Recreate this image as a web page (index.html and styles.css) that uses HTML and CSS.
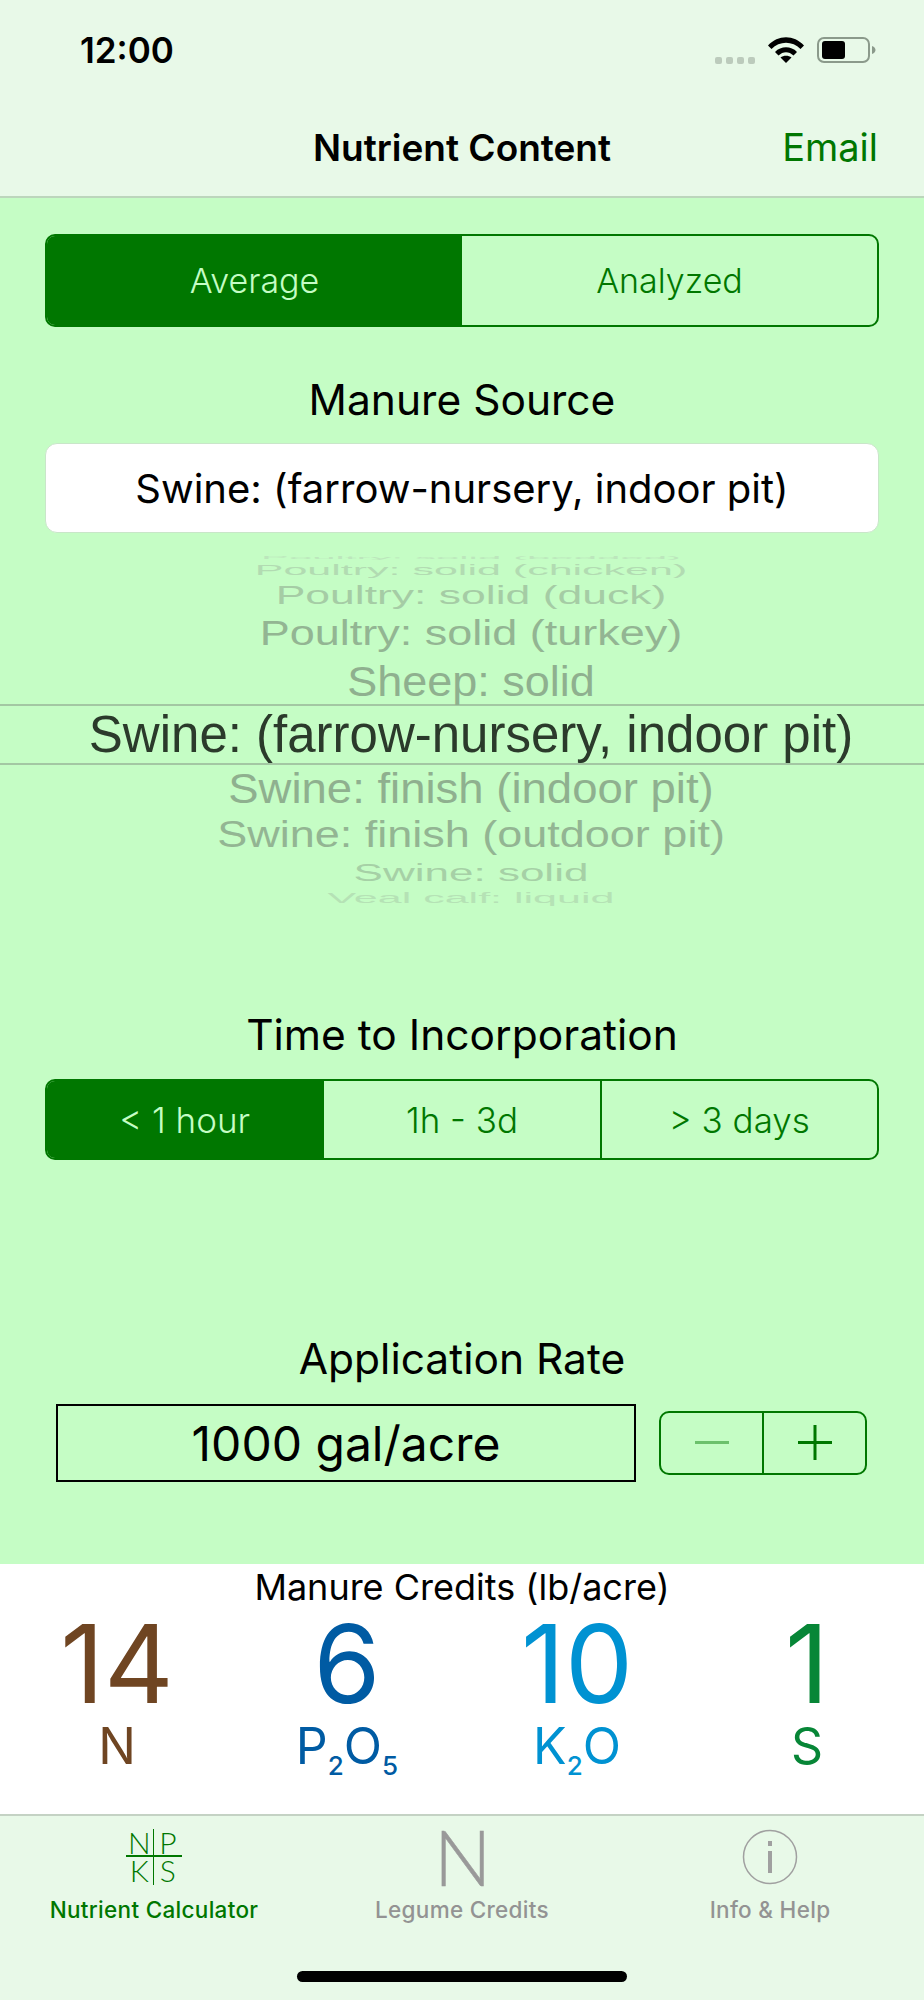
FILE: index.html
```html
<!DOCTYPE html>
<html lang="en">
<head>
  <meta charset="UTF-8">
  <meta name="viewport" content="width=device-width, initial-scale=1.0">
  <title>Nutrient Content</title>
  <link rel="stylesheet" href="styles.css">
</head>
<body>
  <div class="app">
    <!-- Status bar and navigation -->
    <header class="top-bar">
      <div class="status-bar">
        <span class="time">12:00</span>
        <div class="status-icons">
          <div class="signal"><i></i><i></i><i></i><i></i></div>
          <svg class="wifi" width="36" height="26" viewBox="0 0 36 26">
            <path d="M0 8.5C10 -2.5 26 -2.500 36 8.500L32.500 12C24.500 3.500 11.500 3.500 3.500 12Z"/>
            <path d="M7 15C13 8.800 23 8.800 29 15L25.500 18.500C21 14 15 14 10.500 18.500Z"/>
            <path d="M12.500 20.500C15.500 18 20.500 18 23.500 20.500L18 26Z"/>
          </svg>
          <svg class="battery" width="59" height="26" viewBox="0 0 59 26">
            <rect x="1" y="1" width="51" height="24" rx="6" fill="none" stroke="#8b9a8b" stroke-width="2"/>
            <rect x="5" y="4" width="23" height="18" rx="3"/>
            <path d="M55 9C57.500 10 58.500 11.500 58.500 13C58.500 14.500 57.500 16 55 17Z" fill="#8b9a8b"/>
          </svg>
        </div>
      </div>
      <nav class="nav-bar">
        <h1>Nutrient Content</h1>
        <a class="nav-action">Email</a>
      </nav>
    </header>

    <main class="content">
      <div class="segments source-type">
        <div class="segment active">Average</div>
        <div class="segment">Analyzed</div>
      </div>

      <h2 class="section-title manure-title">Manure Source</h2>
      <div class="source-input">Swine: (farrow-nursery, indoor pit)</div>

      <!-- Wheel picker, rows get squashed towards the edges -->
      <div class="picker">
        <div class="row row-ghost"><span>Poultry: solid (bedded)</span></div>
        <div class="row row-chicken"><span>Poultry: solid (chicken)</span></div>
        <div class="row row-duck"><span>Poultry: solid (duck)</span></div>
        <div class="row row-turkey"><span>Poultry: solid (turkey)</span></div>
        <div class="row row-sheep"><span>Sheep: solid</span></div>
        <div class="row row-selected"><span>Swine: (farrow-nursery, indoor pit)</span></div>
        <div class="row row-indoor"><span>Swine: finish (indoor pit)</span></div>
        <div class="row row-outdoor"><span>Swine: finish (outdoor pit)</span></div>
        <div class="row row-solid"><span>Swine: solid</span></div>
        <div class="row row-veal"><span>Veal calf: liquid</span></div>
      </div>

      <h2 class="section-title time-title">Time to Incorporation</h2>
      <div class="segments time-segments">
        <div class="segment active">&lt; 1 hour</div>
        <div class="segment">1h - 3d</div>
        <div class="segment">&gt; 3 days</div>
      </div>

      <h2 class="section-title rate-title">Application Rate</h2>
      <div class="rate-row">
        <div class="rate-input">1000 gal/acre</div>
        <div class="stepper">
          <div class="step-btn"><svg width="36" height="36" viewBox="0 0 36 36"><rect x="1" y="16" width="34" height="3" fill="#007700" opacity="0.45"/></svg></div>
          <div class="step-btn"><svg width="36" height="36" viewBox="0 0 36 36"><rect x="1" y="16" width="34" height="3" fill="#007700"/><rect x="16.500" y="0" width="3" height="35" fill="#007700"/></svg></div>
        </div>
      </div>
    </main>

    <section class="credits">
      <h3>Manure Credits (lb/acre)</h3>
      <div class="credit-grid">
        <div class="credit credit-n"><div class="amount">14</div><div class="nutrient">N</div></div>
        <div class="credit credit-p"><div class="amount">6</div><div class="nutrient">P<sub>2</sub>O<sub>5</sub></div></div>
        <div class="credit credit-k"><div class="amount">10</div><div class="nutrient">K<sub>2</sub>O</div></div>
        <div class="credit credit-s"><div class="amount">1</div><div class="nutrient">S</div></div>
      </div>
    </section>

    <footer class="tab-bar">
      <div class="tabs">
        <div class="tab tab-active">
          <div class="tab-icon npks">
            <b>N</b><b>P</b><b>K</b><b>S</b>
          </div>
          <span>Nutrient Calculator</span>
        </div>
        <div class="tab">
          <div class="tab-icon legume-n">N</div>
          <span>Legume Credits</span>
        </div>
        <div class="tab">
          <svg class="tab-icon" width="56" height="56" viewBox="0 0 56 56">
            <circle cx="28" cy="28" r="26.500" fill="none" stroke="#a0a0a0" stroke-width="1.500"/>
            <rect x="26" y="12" width="4" height="5" fill="#a0a0a0"/>
            <rect x="26" y="22" width="4" height="22" fill="#a0a0a0"/>
          </svg>
          <span>Info &amp; Help</span>
        </div>
      </div>
      <div class="home-indicator"></div>
    </footer>
  </div>
</body>
</html>
```
FILE: styles.css
```css
* {
  box-sizing: border-box;
}

body {
  margin: 0;
  padding: 0;
  font-family: 'Inter', 'Liberation Sans', sans-serif;
  background: #c5fdc5;
  color: #000;
}

.app {
  width: 924px;
  height: 2000px;
  display: flex;
  flex-direction: column;
  overflow: hidden;
}

/* Top bar */
.top-bar {
  height: 198px;
  background: #e8f9e8;
  border-bottom: 2px solid #bcd6bc;
}

.status-bar {
  height: 100px;
  padding: 0 48px 0 80px;
  display: flex;
  justify-content: space-between;
  align-items: center;
}

.time {
  font-size: 35px;
  font-weight: 600;
}

.status-icons {
  display: flex;
  align-items: center;
  gap: 13px;
}

.signal {
  display: flex;
  gap: 4px;
  margin-top: 20px;
}

.signal i {
  width: 7px;
  height: 7px;
  border-radius: 2px;
  background: #bccbbc;
}

.nav-bar {
  height: 94px;
  position: relative;
  display: flex;
  justify-content: center;
  align-items: center;
}

.nav-bar h1 {
  margin: 0;
  font-size: 37px;
  font-weight: 600;
}

.nav-action {
  position: absolute;
  right: 46px;
  top: 24px;
  font-size: 38px;
  color: #007700;
}

/* Main part */
.content {
  flex: 1;
  background: #c5fdc5;
}

.segments {
  display: flex;
  margin: 0 45px;
  border: 2px solid #007700;
  border-radius: 10px;
  overflow: hidden;
}

.segment {
  flex: 1;
  display: flex;
  justify-content: center;
  align-items: center;
  color: #007700;
  font-size: 34px;
  font-weight: 300;
}

.segment + .segment {
  border-left: 2px solid #007700;
}

.segment.active {
  background: #007700;
  color: #c5fdc5;
}

.source-type {
  height: 93px;
  margin-top: 36px;
}

.source-type .segment + .segment {
  border-left: none;
}

.section-title {
  margin: 0;
  text-align: center;
  font-size: 42.500px;
  font-weight: 400;
  line-height: 60px;
}

.manure-title {
  margin-top: 43px;
}

.source-input {
  height: 90px;
  margin: 13px 45px 0;
  background: #fff;
  border: 1px solid #c9e6c9;
  border-radius: 12px;
  display: flex;
  justify-content: center;
  align-items: center;
  font-size: 40px;
}

/* Picker */
.picker {
  margin-top: 16px;
  padding-left: 18px;
  font-family: 'Liberation Sans', sans-serif;
  font-size: 45px;
  color: #8fb08f;
}

.row {
  display: flex;
  justify-content: center;
  align-items: center;
  overflow: hidden;
  white-space: nowrap;
}

.row span {
  display: block;
}

.row-ghost { height: 12px; color: #bce6bc; }
.row-ghost span { font-size: 42px; transform: translateY(3px) scaleY(0.1); }
.row-chicken { height: 18px; color: #b2dbb2; }
.row-chicken span { font-size: 43px; transform: scaleY(0.34); }
.row-duck { height: 32px; color: #a5cca5; }
.row-duck span { font-size: 44.500px; transform: scaleY(0.6); }
.row-turkey { height: 45px; color: #93b593; }
.row-turkey span { transform: scaleY(0.76); }
.row-sheep { height: 48px; color: #8fb08f; overflow: visible; }
.row-sheep span { transform: translateY(2px) scaleY(0.95); }

.row-selected {
  height: 61px;
  margin-left: -18px;
  padding-left: 18px;
  color: #2b3a2b;
  font-size: 51px;
  border-top: 2px solid #a3c7a3;
  border-bottom: 2px solid #a3c7a3;
}

.row-indoor { height: 48px; color: #8fb08f; }
.row-indoor span { font-size: 45.500px; transform: scaleY(0.92); }
.row-outdoor { height: 44px; color: #93b593; }
.row-outdoor span { transform: scaleY(0.82); }
.row-solid { height: 32px; color: #a6d0a6; }
.row-solid span { font-size: 44px; transform: scaleY(0.55); }
.row-veal { height: 18px; color: #b5e2b5; }
.row-veal span { font-size: 43px; transform: scaleY(0.33); }

.time-title {
  margin-top: 98px;
}

.time-segments {
  height: 81px;
  margin-top: 14px;
}

.time-segments .segment {
  font-size: 35px;
}

.rate-title {
  margin-top: 169px;
}

.rate-row {
  display: flex;
  align-items: center;
  margin: 15px 57px 0 56px;
  gap: 23px;
}

.rate-input {
  width: 580px;
  height: 78px;
  border: 2px solid #000;
  display: flex;
  justify-content: center;
  align-items: center;
  font-size: 48px;
}

.stepper {
  flex: 1;
  height: 64px;
  display: flex;
  border: 2px solid #007700;
  border-radius: 10px;
}

.step-btn {
  flex: 1;
  display: flex;
  justify-content: center;
  align-items: center;
}

.step-btn + .step-btn {
  border-left: 2px solid #007700;
}

/* Credits */
.credits {
  height: 250px;
  background: #fff;
  text-align: center;
}

.credits h3 {
  margin: 0;
  font-size: 36px;
  font-weight: 400;
  line-height: 46px;
}

.credit-grid {
  display: flex;
  padding: 0 0 0 2px;
}

.credit {
  width: 230px;
}

.amount {
  font-size: 108px;
  line-height: 108px;
}

.nutrient {
  font-size: 50px;
  line-height: 56px;
}

.nutrient sub {
  font-size: 26px;
  font-weight: 500;
  line-height: 0;
}

.credit-n { color: #6f4522; }
.credit-p { color: #005ba3; }
.credit-k { color: #0092d2; }
.credit-s { color: #078637; }

/* Tab bar */
.tab-bar {
  height: 186px;
  background: #e8f9e8;
  border-top: 2px solid #c4d2c4;
  position: relative;
}

.tabs {
  display: flex;
  justify-content: space-around;
  padding-top: 13px;
}

.tab {
  width: 308px;
  display: flex;
  flex-direction: column;
  align-items: center;
  color: #939393;
  font-size: 22.500px;
  font-weight: 500;
  letter-spacing: 0.3px;
}

.tab-icon {
  display: block;
  width: 56px;
  height: 56px;
}

.tab span {
  margin-top: 11px;
}

.tab-active {
  color: #007700;
}

/* Four letters split by a cross */
.npks {
  display: grid;
  grid-template-columns: 28px 28px;
  grid-template-rows: 28px 28px;
  font-family: 'Lato', sans-serif;
  font-size: 30px;
  font-weight: 300;
  line-height: 27px;
  text-align: center;
}

.npks b {
  font-weight: 300;
}

.npks b:nth-child(odd) {
  border-right: 1px solid #007700;
}

.npks b:nth-child(-n+2) {
  border-bottom: 2px solid #007700;
}

.legume-n {
  color: #999;
  font-family: 'Lato', sans-serif;
  font-size: 76px;
  font-weight: 300;
  line-height: 56px;
  text-align: center;
  letter-spacing: 0;
  -webkit-text-stroke: 0.5px #999;
}

.home-indicator {
  position: absolute;
  left: 297px;
  bottom: 18px;
  width: 330px;
  height: 11px;
  border-radius: 6px;
  background: #000;
}
```
